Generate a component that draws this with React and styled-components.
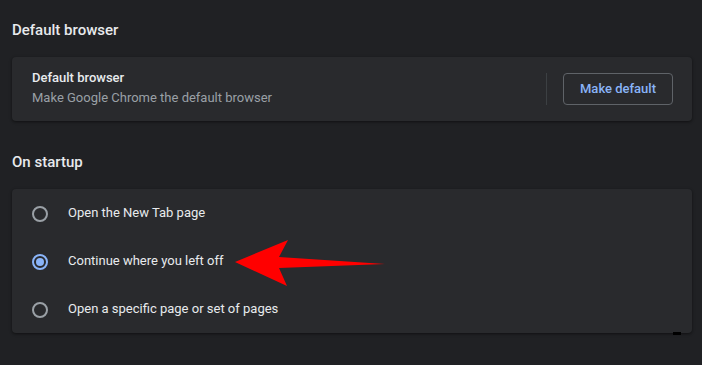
import styled, { createGlobalStyle } from "styled-components"

const Global = createGlobalStyle`
  html, body {
    margin: 0;
    background: #202124;
  }
  body {
    font-family: Roboto, "Liberation Sans", sans-serif;
    font-size: 13px;
    color: #e8eaed;
    -webkit-font-smoothing: antialiased;
  }
`

const Page = styled.div`
  position: relative;
  width: 702px;
  height: 365px;
  padding: 0 10px 0 12px;
  box-sizing: border-box;
  overflow: hidden;
`

const SectionTitle = styled.h2`
  margin: ${(p) => (p.$first ? "20px" : "31px")} 0 17px;
  font-size: 15px;
  font-weight: 500;
  line-height: 20px;
  color: #e8eaed;
`

const Card = styled.div`
  background: #292a2d;
  border-radius: 4px;
  box-shadow: 0 1px 2px rgba(0, 0, 0, 0.3), 0 1px 3px 1px rgba(0, 0, 0, 0.15);
`

const BrowserRow = styled.div`
  display: flex;
  align-items: center;
  height: 64px;
  padding: 0 20px;
  box-sizing: border-box;
`

const Labels = styled.div`
  flex: 1;
  display: flex;
  flex-direction: column;
  padding-bottom: 2px;
`

const Label = styled.div`
  line-height: 20px;
  font-weight: 500;
  color: #e8eaed;
`

const SubLabel = styled.div`
  line-height: 20px;
  color: #9aa0a6;
`

const Divider = styled.div`
  width: 1px;
  height: 32px;
  background: #3c4043;
  margin-right: 16px;
`

const OutlineButton = styled.button`
  height: 32px;
  width: 110px;
  border: 1px solid #5f6368;
  border-radius: 4px;
  background: transparent;
  color: #8ab4f8;
  font-family: inherit;
  font-size: 13px;
  font-weight: 500;
  padding: 0;
  margin-top: -1px;
  margin-right: -1px;
`

const RadioRow = styled.label`
  display: flex;
  align-items: center;
  height: 48px;
  padding-left: 20px;
  gap: 20px;
`

const Radio = styled.span`
  width: 16px;
  height: 16px;
  box-sizing: border-box;
  border-radius: 50%;
  border: 2px solid ${(p) => (p.$checked ? "#8ab4f8" : "#9aa0a6")};
  display: flex;
  align-items: center;
  justify-content: center;
  margin-top: 1px;

  &::after {
    content: "";
    width: 8px;
    height: 8px;
    border-radius: 50%;
    background: ${(p) => (p.$checked ? "#8ab4f8" : "transparent")};
  }
`

const RadioText = styled.span`
  color: #e8eaed;
  line-height: 20px;
`

const Arrow = styled.svg`
  position: absolute;
  left: 0;
  top: 0;
  pointer-events: none;
`

const Speck = styled.div`
  position: absolute;
  left: 673px;
  top: 332px;
  width: 8px;
  height: 3px;
  background: #000;
`

const startupOptions = [
  { text: "Open the New Tab page", checked: false },
  { text: "Continue where you left off", checked: true },
  { text: "Open a specific page or set of pages", checked: false },
]

const App = () => {
  return (
    <Page>
      <Global />
      <SectionTitle $first>Default browser</SectionTitle>
      <Card>
        <BrowserRow>
          <Labels>
            <Label>Default browser</Label>
            <SubLabel>Make Google Chrome the default browser</SubLabel>
          </Labels>
          <Divider />
          <OutlineButton>Make default</OutlineButton>
        </BrowserRow>
      </Card>

      <SectionTitle>On startup</SectionTitle>
      <Card>
        {startupOptions.map((opt, index) => (
          <RadioRow key={index}>
            <Radio $checked={opt.checked} />
            <RadioText>{opt.text}</RadioText>
          </RadioRow>
        ))}
      </Card>

      <Speck />
      <Arrow width="702" height="365" viewBox="0 0 702 365">
        <path
          d="M235 262 L288 240 L279 257 L385 264 L279 268 L287 286 Z"
          fill="#ff0000"
        />
      </Arrow>
    </Page>
  )
}

export default App
